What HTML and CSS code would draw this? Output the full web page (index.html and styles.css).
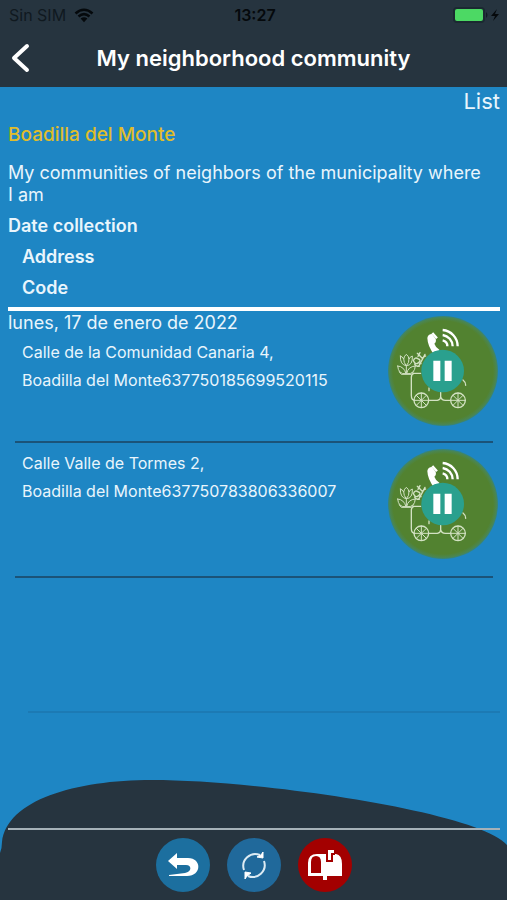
FILE: index.html
```html
<!DOCTYPE html>
<html lang="en">
<head>
<meta charset="utf-8">
<meta name="viewport" content="width=device-width, initial-scale=1">
<title>My neighborhood community</title>
<link rel="stylesheet" href="styles.css">
</head>
<body>
<svg class="defs" aria-hidden="true">
  <defs>
    <radialGradient id="disc">
      <stop offset="0.91" stop-color="#528230"/>
      <stop offset="0.97" stop-color="#4b8650"/>
      <stop offset="1" stop-color="#348480"/>
    </radialGradient>
    <symbol id="cart" viewBox="0 0 330 330">
      <circle cx="165" cy="165" r="165" fill="url(#disc)"/>
      <g fill="none" stroke="#d3e2c3" stroke-width="4" stroke-linecap="round" stroke-linejoin="round">
        <path d="M98 172H78Q70 174 70 184V238Q70 253 80 253M123 253H148Q158 251 158 242V229M158 242Q160 253 172 253H188M225 192Q233 198 233 208M123 216V224"/>
        <circle cx="100" cy="253" r="22"/>
        <circle cx="210" cy="253" r="22"/>
        <path d="M100 231V275M78 253H122M85 238L115 268M115 238L85 268M210 231V275M188 253H232M195 238L225 268M225 238L195 268" stroke-width="3"/>
        <path d="M37 120Q44 122 47 129Q49 119 55 115Q62 120 63 129Q66 122 73 120Q75 148 55 149Q36 147 37 120M47 129Q47 141 54 148M63 129Q64 140 56 148M55 149V173M29 150Q48 151 54 173Q31 176 29 150M82 150Q60 151 56 173Q80 176 82 150M34 168L40 175H70L76 168" stroke-width="3"/>
        <path d="M76 134Q81 121 91 129Q101 132 91 140Q83 148 76 134M80 144Q82 151 94 151M92 151L111 115M88 112L102 126M90 121L96 110M102 126L113 120M91 140L99 143"/>
      </g>
      <path d="M118 66Q120 54 132 54L143 68Q146 77 139 83Q142 93 154 101L150 116H139Q119 92 118 66Z" fill="#fff"/>
      <path d="M133 51L147 67M164 73A18 18 0 0 1 178 91M164 57A35 35 0 0 1 194 91M164 42A49 49 0 0 1 209 91" fill="none" stroke="#fff" stroke-width="7"/>
      <circle cx="164" cy="165" r="64" fill="#2aa08e"/>
      <path d="M136 134H157V195H136ZM170 134H191V195H170Z" fill="#fff"/>
    </symbol>
  </defs>
</svg>

<header class="top">
  <div class="status">
    <div class="carrier">Sin SIM
      <svg class="wifi" viewBox="0 0 20 15" aria-hidden="true"><path d="M1.5 5.5Q10-2 18.500 5.500M4.500 8.500Q10 3.700 15.500 8.500" fill="none" stroke="#05090c" stroke-width="2.600"/><path d="M6.600 10.600Q10 8 13.400 10.600L10 14.200Z" fill="#05090c"/></svg>
    </div>
    <time class="clock">13:27</time>
    <svg class="battery" viewBox="0 0 48 16" aria-hidden="true"><rect x="1" y="1" width="30" height="14" rx="3" fill="#4cd964" stroke="#1b2931" stroke-width="2"/><path d="M33 5q3 3 0 6z" fill="#111d24"/><path d="M44 2L38 9H42L40 14L46 7H42Z" fill="#05090c"/></svg>
  </div>
  <div class="nav">
    <button class="back" type="button" aria-label="Back"><svg viewBox="0 0 20 30" aria-hidden="true"><path d="M17 3L4 15L17 27" fill="none" stroke="#fff" stroke-width="4" stroke-linecap="round" stroke-linejoin="round"/></svg></button>
    <h1 class="title">My neighborhood community</h1>
  </div>
</header>

<main class="content">
  <a class="list-link" href="#collections">List</a>
  <h2 class="town">Boadilla del Monte</h2>
  <p class="intro">My communities of neighbors of the municipality where I am</p>
  <div class="heads">
    <div class="head">Date collection</div>
    <div class="head indent">Address</div>
    <div class="head indent">Code</div>
  </div>
  <ul class="rows" id="collections">
    <li class="row first">
      <div class="details">
        <div class="date">lunes, 17 de enero de 2022</div>
        <div class="line">Calle de la Comunidad Canaria 4,</div>
        <div class="line">Boadilla del Monte637750185699520115</div>
      </div>
      <button class="pause" type="button" aria-label="Pause collection"><svg aria-hidden="true"><use href="#cart"/></svg></button>
    </li>
    <li class="row">
      <div class="details">
        <div class="line">Calle Valle de Tormes 2,</div>
        <div class="line">Boadilla del Monte637750783806336007</div>
      </div>
      <button class="pause" type="button" aria-label="Pause collection"><svg aria-hidden="true"><use href="#cart"/></svg></button>
    </li>
    <li class="row empty" aria-hidden="true"></li>
  </ul>
</main>

<footer class="bottom">
  <svg class="hill" viewBox="0 0 507 120" preserveAspectRatio="none" aria-hidden="true"><path d="M0 120V73Q2 68 2 62C7 20 75 0 152 0C260 0 480 32 507 65V120Z" fill="#26343f"/></svg>
  <nav class="actions">
    <button class="action" type="button" aria-label="Return"><svg viewBox="0 0 54 54" aria-hidden="true"><path d="M12 23L21 15V20H32C46 20 46 38 31 38H13V37L29 35C36 34 36 27 30 27H21V31Z" fill="#fff"/></svg></button>
    <button class="action sync" type="button" aria-label="Refresh"><svg viewBox="0 0 54 54" aria-hidden="true"><path d="M17 32A12 12 0 0 1 33 17M37 23A12 12 0 0 1 21 38" fill="none" stroke="#dcebf3" stroke-width="2"/><path d="M30 19L36 20V14L34 17ZM24 35L18 34V41L20 38Z" fill="#fff" stroke="#fff" stroke-linejoin="round"/></svg></button>
    <button class="action mail" type="button" aria-label="Mailbox"><svg viewBox="0 0 54 54" aria-hidden="true"><path d="M10 38V25Q10 16 19 16H38Q44 17 44 26V38H29V42H25V38ZM13 35H23V24Q23 18 18 18Q13 18 13 24Z" fill="#fff" fill-rule="evenodd"/><path d="M28 24V11H37V17H35V24Z" fill="#a30000"/><path d="M30 22V12H36V15H33V22Z" fill="#fff"/></svg></button>
  </nav>
</footer>
</body>
</html>
```
FILE: styles.css
```css
* {
  box-sizing: border-box;
}

body {
  margin: 0;
  min-height: 100vh;
  display: flex;
  flex-direction: column;
  background: #1e86c4;
  color: #e9f5fc;
  font-family: Inter, "Liberation Sans", sans-serif;
  font-size: 18px;
}

h1, h2, p, ul {
  margin: 0;
  padding: 0;
}

button {
  padding: 0;
  border: 0;
  background: none;
  cursor: pointer;
}

svg {
  display: block;
}

.defs {
  position: absolute;
  width: 0;
  height: 0;
}

.top {
  background: #26343f;
}

.status {
  display: grid;
  grid-template-columns: 1fr auto 1fr;
  align-items: center;
  height: 30px;
  padding: 0 6px 0 9px;
  color: #05090c;
  font-size: 16px;
}

.carrier {
  display: flex;
  align-items: center;
  gap: 8px;
  color: #10191f;
}

.wifi {
  width: 20px;
  height: 15px;
}

.clock {
  font-weight: 600;
}

.battery {
  width: 48px;
  height: 16px;
  justify-self: end;
}

.nav {
  display: grid;
  grid-template-columns: 32px 1fr 32px;
  align-items: center;
  height: 57px;
  padding: 0 10px 2px;
}

.back svg {
  width: 20px;
  height: 30px;
}

.title {
  color: #fff;
  font-size: 22px;
  font-weight: 600;
  line-height: 28px;
  text-align: center;
  white-space: nowrap;
}

.content {
  flex: 1;
  display: flex;
  flex-direction: column;
  padding: 0 7px 0 8px;
}

.list-link {
  align-self: flex-end;
  color: inherit;
  font-size: 22px;
  line-height: 28px;
  text-decoration: none;
}

.town {
  padding: 9px 0 16px;
  color: #e0bd2b;
  font-size: 19px;
  font-weight: 500;
  line-height: 22px;
}

.intro {
  padding-right: 12px;
  line-height: 22px;
}

.heads {
  padding: 4px 0;
  border-bottom: 4px solid #fff;
}

.head {
  font-size: 18px;
  font-weight: 600;
  line-height: 31px;
}

.indent {
  padding-left: 14px;
}

.rows {
  list-style: none;
}

.row {
  display: flex;
  justify-content: space-between;
  align-items: flex-start;
  min-height: 135px;
  margin: 0 7px;
  padding-top: 6px;
  border-bottom: 2px solid #1b5378;
}

.first {
  min-height: 132px;
  padding-top: 0;
}

.first .pause {
  margin-top: 5px;
}

.details {
  flex: 1;
  margin-left: -7px;
}

.date {
  margin-bottom: 3px;
  line-height: 24px;
}

.line {
  padding-left: 14px;
  font-size: 16px;
  line-height: 28px;
}

.pause {
  flex: none;
  margin-right: -5px;
}

.pause svg {
  width: 110px;
  height: 110px;
}

.empty {
  margin: 0 0 0 20px;
  border-color: #1c7ab4;
}

.bottom {
  position: relative;
  padding: 48px 7px 8px 8px;
}

.hill {
  position: absolute;
  inset: 0;
  z-index: -1;
  width: 100%;
  height: 100%;
}

.actions {
  display: flex;
  justify-content: center;
  gap: 17px;
  padding-top: 8px;
  border-top: 2px solid #a5b1b8;
}

.action {
  width: 54px;
  height: 54px;
  border-radius: 50%;
  background: #1c6f9f;
}

.sync {
  background: #20699b;
}

.mail {
  background: #a30000;
}
```
